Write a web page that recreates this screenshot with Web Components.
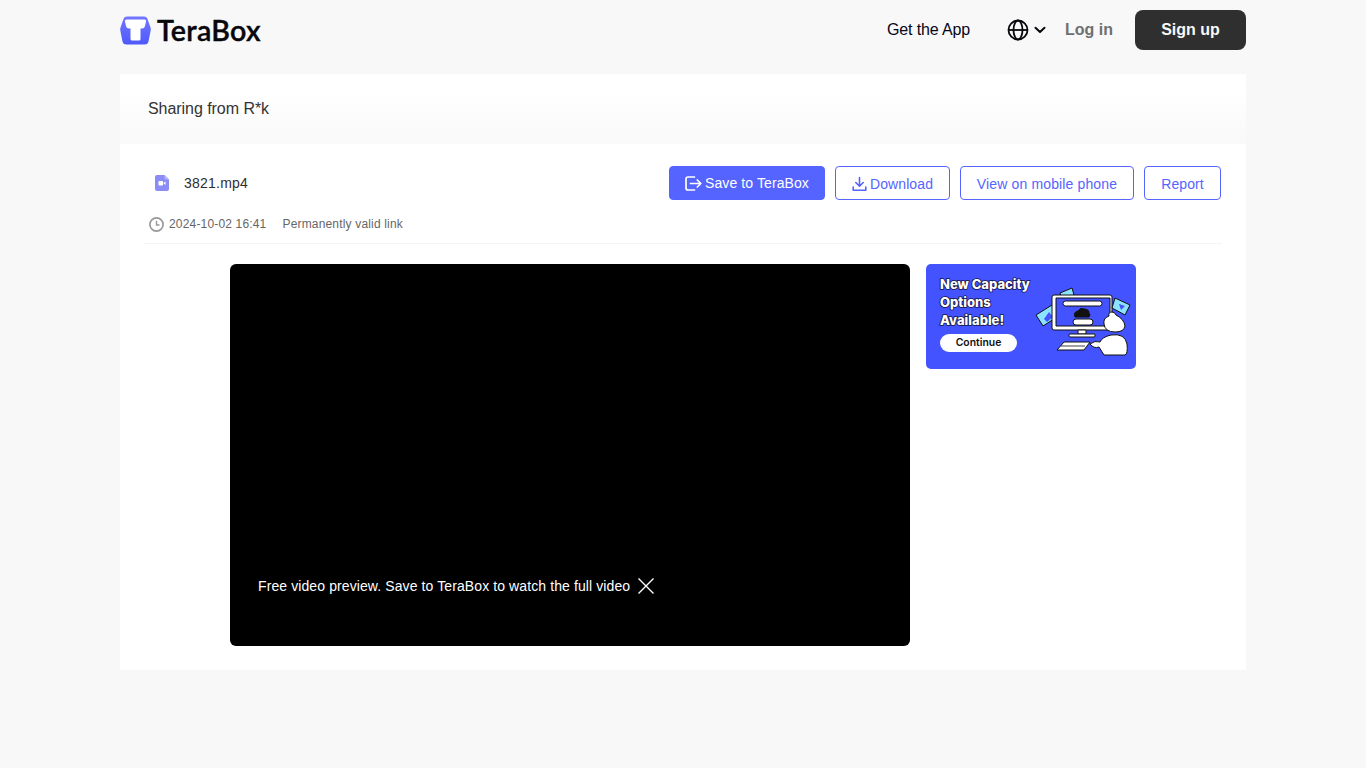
<!DOCTYPE html>
<html lang="en"><head><meta charset="utf-8"><title>TeraBox</title>
<style>
html,body{margin:0;padding:0;background:#f8f8f8;height:100%;overflow:hidden}
body{font-family:"Liberation Sans",Arial,sans-serif;color:#2f2f2f}
</style></head><body>
<tb-page>
  <tb-header></tb-header>
  <tb-share owner="R*k"></tb-share>
</tb-page>
<script>
function def(name, html){
  customElements.define(name, class extends HTMLElement{
    constructor(){super();const r=this.attachShadow({mode:'open'});r.innerHTML=typeof html==='function'?html(this):html;}
  });
}
def('tb-page',`<style>:host{display:flex;flex-direction:column;width:1126px;margin:0 auto}</style><slot></slot>`);

def('tb-logo',`<style>
:host{display:flex;align-items:center;gap:6px}
svg{display:block}
span{font:600 28.6px/30px Lato,"Inter",sans-serif;color:#07070c;letter-spacing:.3px;-webkit-text-stroke:.4px #07070c}
</style>
<svg width="31" height="29" viewBox="0 0 31 29"><defs><linearGradient id="g" x1="0" y1="0" x2="0" y2="1"><stop offset="0" stop-color="#7377ff"/><stop offset="1" stop-color="#4d59fb"/></linearGradient></defs>
<path d="M7 .5H24Q26.500 .5 27.300 2.600L30.500 11.500Q31 13 30.700 14.500L28.600 25Q28 28.500 24.500 28.500H6.500Q3 28.500 2.400 25L.3 14.500Q0 13 .5 11.500L3.700 2.600Q4.500 .5 7 .5Z" fill="url(#g)"/>
<path d="M6.500 3.500H24.500Q26.500 3.500 26 5.500L25 10Q24.500 12.500 22 12.500H20.500V23Q20.500 24.500 19 24.500H12Q10.500 24.500 10.500 23V12.500H9Q6.500 12.500 6 10L5 5.500Q4.500 3.500 6.500 3.500Z" fill="#fff"/>
</svg><span>TeraBox</span>`);

def('tb-header',`<style>
:host{display:flex;align-items:center;height:60px;margin-bottom:14px}
.sp{flex:1}
.app{font-size:16px;color:#06061a;letter-spacing:-.13px;margin-right:37px}
.lang{display:flex;align-items:center;gap:5px;margin-right:19px}
svg{display:block}
.login{font-size:16px;font-weight:700;color:#6f6f6f;margin-right:22px}
.signup{width:111px;height:40px;border-radius:8px;background:#2f2f2f;color:#f8f8f8;font-size:16px;font-weight:700;display:flex;align-items:center;justify-content:center}
</style>
<tb-logo></tb-logo><div class="sp"></div>
<div class="app">Get the App</div>
<div class="lang">
<svg width="22" height="22" viewBox="0 0 22 22" fill="none" stroke="#07070c" stroke-width="1.800"><circle cx="11" cy="11" r="9.500"/><ellipse cx="11" cy="11" rx="4.500" ry="9.500"/><path d="M1.500 11H20.500"/></svg>
<svg width="12" height="8" viewBox="0 0 12 8" fill="none" stroke="#07070c" stroke-width="2" stroke-linecap="round" stroke-linejoin="round"><path d="M1.500 1.800L6 6L10.500 1.800"/></svg>
</div>
<div class="login">Log in</div>
<div class="signup">Sign up</div>`);

def('tb-button',`<style>
:host{display:inline-flex;align-items:center;justify-content:center;gap:4px;box-sizing:border-box;height:34px;padding-top:2px;border-radius:4px;border:1px solid #5564ff;color:#5564ff;font-size:14px;background:#fff;white-space:nowrap;letter-spacing:.1px}
:host([primary]){background:#5564ff;color:#fff;padding-top:0}
::slotted(svg){display:block}
</style><slot></slot>`);

def('tb-toolbar',`<style>
:host{display:flex;align-items:center;height:34px;padding:0 1px 0 4px}
.ic{width:36px;padding-left:7px;box-sizing:border-box;display:flex}
.n{font-size:14px;letter-spacing:.22px;color:#2f2f2f;flex:1}
.b{display:flex;gap:10px}
</style>
<div class="ic"><svg width="14" height="16" viewBox="0 0 14 16"><path d="M2 0H9.500L14 4.500V14Q14 16 12 16H2Q0 16 0 14V2Q0 0 2 0Z" fill="#8c8cf6"/><path d="M9.500 0L14 4.500H11Q9.500 4.500 9.500 3Z" fill="#b5b5fa"/><rect x="3.500" y="6" width="4.500" height="4.500" rx=".8" fill="#fff"/><path d="M8.500 8L10.500 6.500V10L8.500 8.500Z" fill="#fff"/></svg></div>
<div class="n"><slot></slot></div>
<div class="b">
<tb-button primary style="width:156px;gap:3px"><svg width="17" height="15" viewBox="0 0 17 15" fill="none" stroke="#fff" stroke-width="1.700" stroke-linecap="round" stroke-linejoin="round"><path d="M9.500 1H3Q1 1 1 3V12Q1 14 3 14H9.500"/><path d="M5.500 7.500H15.500M12.300 4L15.800 7.500L12.300 11"/></svg>Save to TeraBox</tb-button>
<tb-button style="width:115px;gap:3px"><svg width="15" height="16" viewBox="0 0 15 16" fill="none" stroke="#5564ff" stroke-width="1.600" stroke-linecap="round" stroke-linejoin="round"><path d="M7.500 1.500V10M3.800 6.500L7.500 10.200L11.200 6.500"/><path d="M1.200 11V14.300H13.800V11" /></svg>Download</tb-button>
<tb-button style="width:174px;letter-spacing:.14px">View on mobile phone</tb-button>
<tb-button style="width:77px">Report</tb-button>
</div>`);

def('tb-meta',`<style>
:host{display:flex;align-items:center;height:16px;margin:16px 0 0;padding:0 0 0 5px;font-size:12px;color:#666;letter-spacing:.17px}
svg{display:block;margin-right:5px}
.t{margin-right:16px}
</style>
<svg width="15" height="15" viewBox="0 0 15 15" fill="none" stroke="#999" stroke-width="1.700"><circle cx="7.500" cy="7.500" r="6.600"/><path d="M7.500 3.800V8H10.500" stroke-width="1.400"/></svg>
<span class="t"><slot name="time"></slot></span><slot name="valid"></slot>`);

def('tb-video',`<style>
:host{display:flex;align-items:flex-end;width:680px;height:382px;background:#000;border-radius:6px;box-sizing:border-box;padding:0 0 50px 28px;color:#fff;font-size:14px;letter-spacing:.1px}
.r{display:flex;align-items:center;gap:8px;line-height:20px}
svg{display:block}
</style><div class="r"><slot></slot>
<svg width="16" height="16" viewBox="0 0 16 16" stroke="#fff" stroke-width="1.400" fill="none"><path d="M.500 .500L15.500 15.500M15.500 .500L.500 15.500"/></svg></div>`);

def('tb-ad',`<style>
:host{display:block;position:relative;width:210px;height:105px;background:#4353ff;border-radius:5px;overflow:hidden;flex:none}
.t{position:absolute;left:14px;top:11px;font:800 13px/18px Inter,"Liberation Sans",sans-serif;color:#fff;-webkit-text-stroke:1.6px #14163f;paint-order:stroke fill;white-space:nowrap}
.b{position:absolute;left:14px;top:70px;width:77px;height:18px;border-radius:9px;background:#fff;color:#111;font:600 10.400px/18px Inter,"Liberation Sans",sans-serif;text-align:center}
svg{position:absolute;left:105px;top:20px}
</style>
<div class="t">New Capacity<br>Options<br>Available!</div><div class="b">Continue</div>
<svg width="100" height="75" viewBox="0 0 100 75">
<g stroke="#111" stroke-width="1" stroke-linejoin="round">
<path d="M5 31L21 21L26 33L12 42Z" fill="#8be3ff"/><path d="M13 35L18 28L22 33L16 38Z" fill="#4353ff" stroke="none"/>
<path d="M29 9L41 4L43 11L31 15Z" fill="#8be3ff"/>
<rect x="21" y="11" width="60" height="35" rx="2" fill="#fff"/><rect x="25" y="14" width="54" height="28" fill="#4353ff"/>
<rect x="32" y="17" width="39" height="5" rx="2.500" fill="#fff"/>
<path d="M44 33Q42 28 47 27Q49 23 53 25Q58 25 58 29Q60 31 58 33Z" fill="#111"/>
<rect x="42" y="35" width="20" height="6" rx="3" fill="#fff"/>
<path d="M47 46H55V50H47Z" fill="#fff"/><rect x="38" y="50" width="26" height="3" rx="1" fill="#fff"/>
<path d="M84 14L99 21L94 31L81 24Z" fill="#8be3ff"/><path d="M88 20L94 22L90 26Z" fill="#4353ff" stroke="none"/>
<path d="M26 66L33 58H59L53 66Z" fill="#fff"/><path d="M30 62H54" stroke-width=".8"/>
<path d="M73 40Q72 34 78 32Q77 28 81 28Q84 28 85 31Q93 35 94 42Q93 48 84 48Q74 48 73 40Z" fill="#fff"/>
<path d="M59 60Q64 56 69 58Q71 53 80 51Q94 49 96 60Q97 70 94 71H73L68 63Q63 65 59 60Z" fill="#fff"/>
</g></svg>`);

def('tb-share',(h)=>`<style>
:host{display:block;background:#fff}
.head{height:70px;box-sizing:border-box;padding:0 28px;display:flex;align-items:center;font-size:16px;letter-spacing:-.05px;color:#333;background:linear-gradient(#fff 20%,#f9f9f9)}
.body{padding:22px 24px 24px}
.rule{height:1px;background:#f4f4f4;margin:11px 0 20px}
.main{display:flex;justify-content:center;align-items:flex-start;gap:16px}
</style>
<div class="head">Sharing from ${h.getAttribute('owner')||'R*k'}</div>
<div class="body">
<tb-toolbar>3821.mp4</tb-toolbar>
<tb-meta><span slot="time">2024-10-02 16:41</span><span slot="valid">Permanently valid link</span></tb-meta>
<div class="rule"></div>
<div class="main"><tb-video>Free video preview. Save to TeraBox to watch the full video</tb-video><tb-ad></tb-ad></div>
</div>`);
</script>
</body></html>
